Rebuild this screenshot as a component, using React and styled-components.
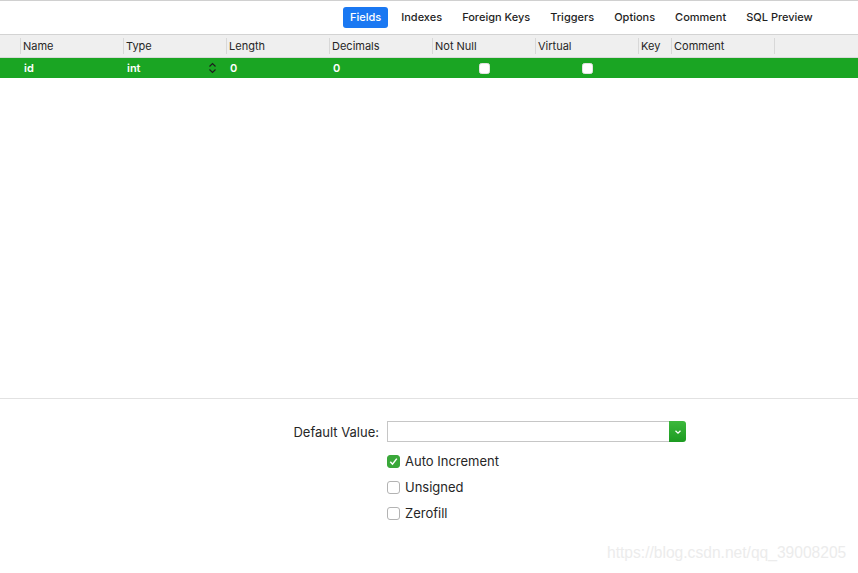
import styled, { createGlobalStyle } from "styled-components";

const GlobalStyle = createGlobalStyle`
  html, body {
    margin: 0;
    padding: 0;
    background: #fff;
  }
  body {
    font-family: "Inter", "Noto Sans", sans-serif;
    color: #222;
  }
`;

const columns = [
  { key: "name", label: "Name", width: 103 },
  { key: "type", label: "Type", width: 103 },
  { key: "length", label: "Length", width: 103 },
  { key: "decimals", label: "Decimals", width: 103 },
  { key: "notnull", label: "Not Null", width: 103 },
  { key: "virtual", label: "Virtual", width: 103 },
  { key: "key", label: "Key", width: 33 },
  { key: "comment", label: "Comment", width: 103 },
];

const gridTemplate = `21px ${columns.map((c) => c.width + "px").join(" ")} 1fr`;

const tabs = ["Fields", "Indexes", "Foreign Keys", "Triggers", "Options", "Comment", "SQL Preview"];

function StepperIcon() {
  return (
    <svg width="9" height="12" viewBox="0 0 9 12">
      <path d="M1.5 4.5 L4.5 1.5 L7.5 4.5" fill="none" stroke="#1d1d1d" strokeWidth="1.2" />
      <path d="M1.5 7.5 L4.5 10.5 L7.5 7.5" fill="none" stroke="#1d1d1d" strokeWidth="1.2" />
    </svg>
  );
}

function App() {
  return (
    <Page>
      <GlobalStyle />
      <Toolbar>
        {tabs.map((t, i) => (
          <Tab key={t} active={i === 0}>{t}</Tab>
        ))}
      </Toolbar>

      <TableArea>
        <HeaderRow>
          <HeaderCell />
          {columns.map((c) => (
            <HeaderCell key={c.key}>{c.label}</HeaderCell>
          ))}
          <HeaderCell last />
        </HeaderRow>
        <DataRow>
          <Cell />
          <Cell>id</Cell>
          <Cell>
            int
            <StepperWrap><StepperIcon /></StepperWrap>
          </Cell>
          <Cell>0</Cell>
          <Cell>0</Cell>
          <Cell center><RowCheck /></Cell>
          <Cell center><RowCheck /></Cell>
          <Cell />
          <Cell />
          <Cell />
        </DataRow>
      </TableArea>

      <Details>
        <FormRow>
          <Label>Default Value:</Label>
          <Combo>
            <ComboInput />
            <ComboButton>
              <svg width="8" height="6" viewBox="0 0 8 6">
                <path d="M1.5 1.8 L4 4.2 L6.5 1.8" fill="none" stroke="#fff" strokeWidth="1.3" />
              </svg>
            </ComboButton>
          </Combo>
        </FormRow>
        <Options>
          <CheckLine>
            <Box checked>
              <svg width="11" height="11" viewBox="0 0 11 11">
                <path d="M2.3 5.8 L4.5 8.2 L8.8 2.6" fill="none" stroke="#fff" strokeWidth="1.5" />
              </svg>
            </Box>
            Auto Increment
          </CheckLine>
          <CheckLine>
            <Box />
            Unsigned
          </CheckLine>
          <CheckLine>
            <Box />
            Zerofill
          </CheckLine>
        </Options>
        <Watermark>https://blog.csdn.net/qq_39008205</Watermark>
      </Details>
    </Page>
  );
}

export default App;

const Page = styled.div`
  width: 858px;
  height: 573px;
  overflow: hidden;
  display: flex;
  flex-direction: column;
  border-top: 1px solid #d0d0d0;
  box-sizing: border-box;
`;

const Toolbar = styled.div`
  height: 33px;
  display: flex;
  align-items: center;
  padding-left: 343px;
`;

const Tab = styled.div`
  height: 21px;
  line-height: 21px;
  padding: 0 7px;
  margin-right: 6px;
  border-radius: 3px;
  font-size: 11px;
  font-weight: 500;
  color: ${(p) => (p.active ? "#fff" : "#1f1f1f")};
  background: ${(p) => (p.active ? "#1a78f2" : "transparent")};
`;

const TableArea = styled.div`
  height: 363px;
  border-top: 1px solid #d3d3d3;
`;

const HeaderRow = styled.div`
  display: grid;
  grid-template-columns: ${gridTemplate};
  height: 22px;
  background: #efefef;
  border-bottom: 1px solid #d9d9d9;
`;

const HeaderCell = styled.div`
  font-size: 11px;
  padding-left: 2px;
  color: #262626;
  border-right: ${(p) => (p.last ? "none" : "1px solid #d8d8d8")};
  margin: 3px 0;
  line-height: 16px;
`;

const DataRow = styled.div`
  display: grid;
  grid-template-columns: ${gridTemplate};
  height: 20px;
  background: #1aa523;
`;

const Cell = styled.div`
  position: relative;
  font-size: 11px;
  font-weight: 600;
  color: #fff;
  line-height: 20px;
  padding-left: ${(p) => (p.center ? "0" : "3px")};
  display: flex;
  align-items: center;
  justify-content: ${(p) => (p.center ? "center" : "flex-start")};
`;

const StepperWrap = styled.span`
  position: absolute;
  right: 10px;
  top: 4px;
  display: flex;
`;

const RowCheck = styled.span`
  width: 11px;
  height: 11px;
  border-radius: 2.5px;
  background: #fff;
  box-sizing: border-box;
  border: 1px solid #e2e2e2;
`;

const Details = styled.div`
  position: relative;
  flex: 1;
  border-top: 1px solid #e2e2e2;
  padding-top: 22px;
`;

const FormRow = styled.div`
  display: flex;
  align-items: center;
  gap: 8px;
  height: 21px;
`;

const Label = styled.div`
  width: 379px;
  font-size: 13px;
  color: #262626;
  text-align: right;
`;

const Combo = styled.div`
  display: flex;
  height: 21px;
  width: 299px;
`;

const ComboInput = styled.div`
  flex: 1;
  border: 1px solid #c6c6c6;
  border-right: none;
  background: #fff;
`;

const ComboButton = styled.div`
  width: 17px;
  display: flex;
  align-items: center;
  justify-content: center;
  border-radius: 0 3px 3px 0;
  background: linear-gradient(#3cb93c, #1c9a21);
`;

const Options = styled.div`
  display: flex;
  flex-direction: column;
  padding-left: 387px;
  margin-top: 6px;
`;

const CheckLine = styled.div`
  display: flex;
  align-items: center;
  gap: 5px;
  height: 26px;
  font-size: 13px;
  color: #262626;
`;

const Box = styled.span`
  width: 13px;
  height: 13px;
  box-sizing: border-box;
  border-radius: 3px;
  display: flex;
  align-items: center;
  justify-content: center;
  background: ${(p) => (p.checked ? "#3aa83a" : "#fff")};
  border: 1px solid ${(p) => (p.checked ? "#3aa83a" : "#b3b3b3")};
`;

const Watermark = styled.div`
  position: absolute;
  left: 607px;
  top: 145px;
  font-family: "Liberation Sans", Arial, sans-serif;
  font-size: 15.6px;
  color: #ececec;
  white-space: nowrap;
`;
